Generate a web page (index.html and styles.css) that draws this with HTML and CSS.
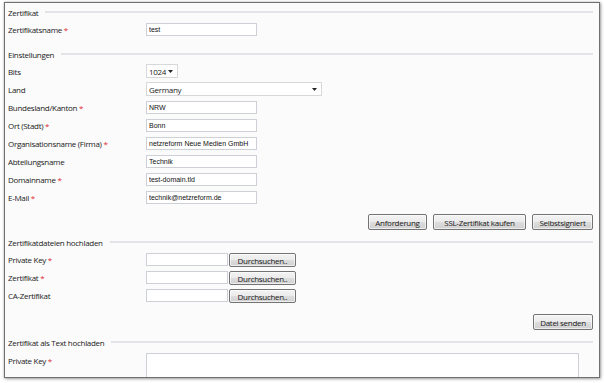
FILE: index.html
```html
<!DOCTYPE html>
<html lang="de">
<head>
<meta charset="utf-8">
<title>Zertifikat</title>
<link rel="stylesheet" href="styles.css">
</head>
<body>
<div class="window">
  <div class="legend first"><span>Zertifikat</span></div>
  <div class="row"><label>Zertifikatsname <em>*</em></label><input class="text" value="test"></div>

  <div class="legend gap8"><span>Einstellungen</span></div>
  <div class="row"><label>Bits</label><div class="select bits"><span>1024</span><svg class="arrow" width="5" height="3" viewBox="0 0 5 3"><path d="M0 0h5L2.5 3z" fill="#222"/></svg></div></div>
  <div class="row"><label>Land</label><div class="select land"><span>Germany</span><svg class="arrow" width="5" height="3" viewBox="0 0 5 3"><path d="M0 0h5L2.5 3z" fill="#222"/></svg></div></div>
  <div class="row"><label>Bundesland/Kanton <em>*</em></label><input class="text" value="NRW"></div>
  <div class="row"><label>Ort (Stadt) <em>*</em></label><input class="text" value="Bonn"></div>
  <div class="row"><label>Organisationsname (Firma) <em>*</em></label><input class="text" value="netzreform Neue Medien GmbH"></div>
  <div class="row"><label>Abteilungsname</label><input class="text" value="Technik"></div>
  <div class="row"><label>Domainname <em>*</em></label><input class="text" value="test-domain.tld"></div>
  <div class="row"><label>E-Mail <em>*</em></label><input class="text" value="technik@netzreform.de"></div>
  <div class="actions">
    <button class="btn w58">Anforderung</button>
    <button class="btn w92">SSL-Zertifikat kaufen</button>
    <button class="btn w60">Selbstsigniert</button>
  </div>

  <div class="legend gap4"><span>Zertifikatdateien hochladen</span></div>
  <div class="row"><label>Private Key <em>*</em></label><div class="file"><input class="text short"><button class="btn browse">Durchsuchen..</button></div></div>
  <div class="row"><label>Zertifikat <em>*</em></label><div class="file"><input class="text short"><button class="btn browse">Durchsuchen..</button></div></div>
  <div class="row"><label>CA-Zertifikat</label><div class="file"><input class="text short"><button class="btn browse">Durchsuchen..</button></div></div>
  <div class="actions gap10">
    <button class="btn w59">Datei senden</button>
  </div>

  <div class="legend gap4"><span>Zertifikat als Text hochladen</span></div>
  <div class="row tall"><label>Private Key <em>*</em></label><textarea class="area"></textarea></div>
</div>
</body>
</html>
```
FILE: styles.css
```css
html, body {
  margin: 0;
  padding: 0;
  background: #ffffff;
}
body {
  width: 604px;
  height: 383px;
  overflow: hidden;
  font-family: "Open Sans", "Noto Sans", sans-serif;
  font-size: 8px;
  letter-spacing: -0.3px;
  color: #1a1a1a;
}
.window {
  margin: 2px 0 0 4px;
  height: 374px;
  width: 585px;
  border: 1px solid #707070;
  box-shadow: 1px 1px 3px rgba(0,0,0,0.35), 0 0 2px rgba(0,0,0,0.2);
  background: #fbfbfb;
  padding: 0 6px 0 3px;
  overflow: hidden;
}
.legend {
  display: flex;
  align-items: center;
  height: 16px;
  gap: 7px;
}
.legend.first { margin-top: 1px; }
.legend.gap8 { margin-top: 8px; }
.legend.gap4 { margin-top: 4px; }
.legend::after {
  content: "";
  flex: 1;
  height: 2px;
  background: #e2e4ea;
}
.row {
  display: flex;
  align-items: center;
  height: 18px;
}
.row label {
  width: 138px;
  flex: none;
}
.row label em {
  font-style: normal;
  color: #e0242b;
}
.text {
  box-sizing: border-box;
  width: 111px;
  height: 13px;
  border: 1px solid #cdd0d6;
  background: #ffffff;
  font-family: "Liberation Sans", Arial, sans-serif;
  font-size: 7px;
  letter-spacing: 0;
  color: #111;
  padding: 0 0 0 2px;
  margin: 0;
  outline: none;
}
.text.short { width: 82px; }
.select {
  box-sizing: border-box;
  height: 14px;
  border: 1px solid #d6d8dc;
  background: #fff;
  display: flex;
  align-items: center;
  justify-content: space-between;
  padding: 0 4px 0 2px;
}
.select .arrow { flex: none; display: block; }
.select.bits { width: 32px; }
.select.land { width: 176px; }
.file {
  display: flex;
  align-items: center;
  gap: 1px;
}
.btn {
  box-sizing: border-box;
  height: 16px;
  padding: 0;
  margin: 0;
  border: 1px solid #737373;
  border-radius: 2px;
  background: linear-gradient(#f3f3f3 0%, #ebebeb 50%, #dddddd 51%, #d0d0d0 100%);
  font-family: "Open Sans", "Noto Sans", sans-serif;
  font-size: 8px;
  letter-spacing: -0.3px;
  color: #1a1a1a;
  box-shadow: inset 0 0 0 1px rgba(255,255,255,0.6);
}
.btn.browse { width: 67px; height: 14px; margin-top: 2px; }
.w58 { width: 59px; }
.w92 { width: 93px; }
.w60 { width: 61px; }
.w59 { width: 60px; }
.actions {
  display: flex;
  justify-content: flex-end;
  gap: 6px;
  margin-top: 8px;
}
.actions.gap10 { margin-top: 10px; }
.row.tall {
  align-items: flex-start;
  height: auto;
}
.row.tall label { padding-top: 5px; }
.area {
  box-sizing: border-box;
  width: 433px;
  height: 40px;
  margin: 3px 0 0 0;
  border: 1px solid #cdd0d6;
  background: #fff;
  resize: none;
}
```
